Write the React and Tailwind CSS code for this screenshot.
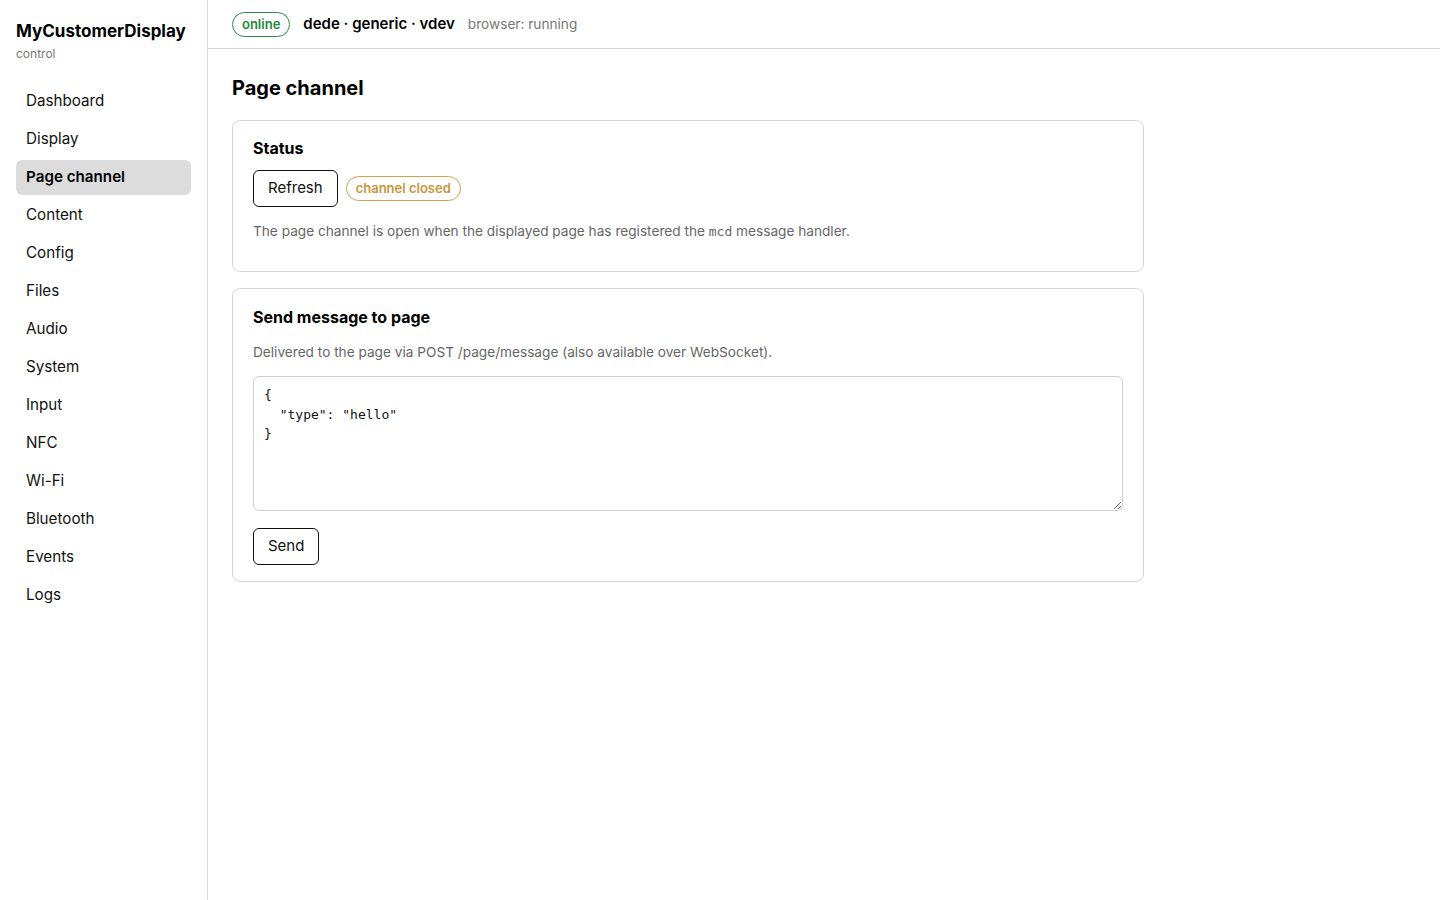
import React from "react";

const nav = ["Dashboard","Display","Page channel","Content","Config","Files","Audio","System","Input","NFC","Wi-Fi","Bluetooth","Events","Logs"];

export default function App() {
  return (
    <div className="flex min-h-[900px] bg-white text-[#111]" style={{fontFamily: "Inter, 'Noto Sans', sans-serif"}}>
      <aside className="w-[208px] shrink-0 border-r border-[#d6d6d6] px-4 pt-[20px]">
        <div className="text-[17px] font-bold leading-[22px] text-black">MyCustomerDisplay</div>
        <div className="mt-[4px] text-[12px] leading-[16px] text-[#777]">control</div>
        <nav className="mt-[22px] flex flex-col gap-[3px]">
          {nav.map((n) => (
            <div key={n} className={"h-[35px] rounded-md pl-[10px] pt-[5px] leading-[24px] text-[15.2px] " + (n === "Page channel" ? "bg-[#dcdcdc] font-semibold text-black" : "text-[#111]")}>{n}</div>
          ))}
        </nav>
      </aside>
      <div className="flex-1 flex flex-col">
        <header className="h-[49px] border-b border-[#d6d6d6] flex items-center px-6 pt-[1px] gap-[13px]">
          <span className="h-[25px] px-[9px] rounded-full border border-[#2e8b47] text-[#1f8a3c] text-[13px] font-semibold flex items-center">online</span>
          <span className="text-[15px] font-semibold text-black">dede · generic · vdev</span>
          <span className="text-[13.65px] text-[#777]">browser: running</span>
        </header>
        <main className="px-6 pt-[26px]">
          <h1 className="text-[20px] font-bold leading-[26px] text-black">Page channel</h1>
          <div className="mt-[19px] w-[912px] flex flex-col gap-[16px]">
            <section className="rounded-lg border border-[#d4d4d4] px-5 pt-[16px] pb-[29px]">
              <h2 className="text-[16px] font-bold leading-[22px] text-black">Status</h2>
              <div className="mt-[11px] flex items-center gap-2">
                <button className="h-[37px] px-[14px] rounded-md border border-[#111] bg-white text-[15px] text-[#111]">Refresh</button>
                <span className="h-[25px] px-[9px] rounded-full border border-[#d4a24e] text-[#c8963c] text-[13px] font-semibold flex items-center">channel closed</span>
              </div>
              <p className="mt-[14px] text-[13.65px] leading-[20px] text-[#666]">The page channel is open when the displayed page has registered the <code className="text-[13px]" style={{fontFamily: "'DejaVu Sans Mono', monospace"}}>mcd</code> message handler.</p>
            </section>
            <section className="rounded-lg border border-[#d4d4d4] px-5 pt-[17px] pb-4">
              <h2 className="text-[16px] font-bold leading-[22px] text-black">Send message to page</h2>
              <p className="mt-[14px] text-[13.65px] leading-[20px] text-[#666]">Delivered to the page via POST /page/message (also available over WebSocket).</p>
              <textarea
                className="mt-[14px] block w-full h-[135px] rounded-md border border-[#cfcfcf] px-[10px] py-[8px] text-[13px] leading-[19.5px] text-[#111] outline-none"
                style={{fontFamily: "'DejaVu Sans Mono', monospace"}}
                defaultValue={'{\n  "type": "hello"\n}'}
              />
              <button className="mt-[17px] h-[37px] px-[14px] rounded-md border border-[#111] bg-white text-[15px] text-[#111]">Send</button>
            </section>
          </div>
        </main>
      </div>
    </div>
  );
}
